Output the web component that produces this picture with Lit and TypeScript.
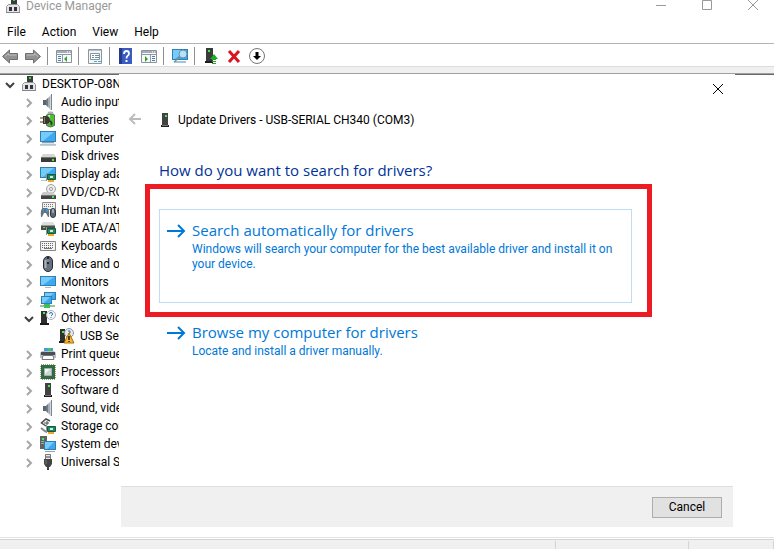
import { LitElement, html, svg, css } from "lit";
import { customElement, state } from "lit/decorators.js";

const SCREEN = (x: number, y: number, w: number, h: number) => svg`
  <rect x=${x + 0.5} y=${y + 0.5} width=${w - 1} height=${h - 1} fill="#3fa9f0" stroke="#2f7fb5"/>
  <path d="M${x + 1} ${y + 1}h${w - 3}L${x + 3} ${y + h - 1}h-2z" fill="#74ccfb"/>`;

const CARD = svg`
  <path d="M7.500 8.500h8v5h-8z" fill="#1e8a62" stroke="#14583f"/>
  <rect x="10" y="10" width="3" height="2" fill="#cfe9dd"/>
  <path d="M8 14h6v2H8z" fill="#f2a51f"/>
  <path d="M6.500 7v8" stroke="#8d9a94"/>`;

const SPEAKER = svg`
  <path d="M3 6h3v5H3z" fill="#59646e"/>
  <path d="M6 6l5-5v15l-5-5z" fill="#a5aeb6"/>
  <path d="M6 6l2-2v9l-2-2z" fill="#6e7983"/>
  <path d="M10 1h2v15h-2z" fill="#d2d8dd"/>
  <path d="M11.500 0v16" stroke="#7b858e"/>`;

const ICONS: Record<string, unknown> = {
  root: svg`
    <path d="M6 0h6v7H6z" fill="#3b3b3b"/><rect x="8" y="1" width="2" height="2" fill="#3fd04c"/>
    <path d="M3.500 6.500h9l2 2v6h-13v-6z" fill="#e4e4e6" stroke="#96969b"/>
    <path d="M1 14.500h14" stroke="#85858a"/>
    <path d="M4 9h3v4H4zM9 9h3v4H9z" fill="#33343c"/>`,
  audio: SPEAKER,
  sound: SPEAKER,
  battery: svg`
    <rect x="8" y="0" width="5" height="3" rx="1" fill="#c4c8c4" stroke="#707a70" stroke-width=".5"/>
    <path d="M6.500 3q4-2 8 0v10.500q-4 3-8 0z" fill="#4cc22e" stroke="#5c6b5a"/>
    <path d="M8 3h2v8H8z" fill="#c4f3b0"/>
    <path d="M0 6h4M0 10h4" stroke="#8b7f4c" stroke-width="1.500"/>
    <path d="M3 4h3q4 0 4 4t-4 4H3z" fill="#3a3a34"/>
    <path d="M4.500 5v6" stroke="#7d7d72"/>
    <path d="M9 9q4 1 2 4" fill="none" stroke="#3a3a34" stroke-width="2"/>`,
  computer: svg`${SCREEN(0, 1, 16, 11)}<path d="M2 13h12l2 2H0z" fill="#dbe4ea"/><path d="M2 12.500h12M0 15h16" stroke="#8fa3b1"/>`,
  disk: svg`
    <path d="M3 6h11l2 3H1z" fill="#d6d6d6"/><path d="M1 9h15v5H1z" fill="#3b3b3b"/>
    <path d="M1 9.500h15" stroke="#777"/><rect x="12" y="11" width="2" height="2" fill="#3df04a"/>`,
  display: svg`${SCREEN(0, 1, 16, 11)}<path d="M1 14h5v1H1z" fill="#b5c6d2"/>${CARD}`,
  dvd: svg`
    <circle cx="11" cy="5" r="4.500" fill="#ececec" stroke="#a2a2a2"/><circle cx="11" cy="5" r="1.500" fill="#fff" stroke="#999"/>
    <path d="M3 8h8l5 3H1z" fill="#cacaca"/><path d="M1 11h15v4H1z" fill="#444"/><path d="M1 11.500h15" stroke="#777"/><rect x="12" y="12" width="2" height="2" fill="#3df04a"/>`,
  human: svg`
    <path d="M2.500 .5h13v7h-13z" fill="#f2f2f2" stroke="#8c8c8c"/>
    <path d="M4 2.500h10M4 4.500h10" stroke="#777" stroke-dasharray="1 1"/>
    <path d="M1 15q-1-8 2-9h4q3 1 2 9H8l-2-4H4l-2 4z" fill="#6a7179"/><path d="M3 7h1v3H3zM6 7h2v3H6z" fill="#2f9be8"/>
    <rect x="10.500" y="6.500" width="5" height="9" rx="2.500" fill="#5d6874" stroke="#313940"/><path d="M13 7v4" stroke="#dce4ea"/>`,
  ide: svg`
    <path d="M3 2h10l2 3H1z" fill="#dedede"/><path d="M1 5h14v5H1z" fill="#4c4c4c"/><path d="M1 5.500h14" stroke="#999"/><rect x="3" y="7" width="2" height="1" fill="#3df04a"/>${CARD}`,
  keyboard: svg`
    <path d="M.5 3.500h15v9H.5z" fill="#f4f4f4" stroke="#868686"/>
    <path d="M2 5.500h12M2 7.500h12M2 9.500h12" stroke="#6a6a6a" stroke-dasharray="1 1"/>
    <path d="M4 10.500h8" stroke="#777"/>`,
  mouse: svg`
    <rect x="3.500" y=".5" width="9" height="15" rx="4.500" fill="#66717d" stroke="#252b31"/>
    <path d="M5.500 4v8" stroke="#a9b4be" stroke-width="2"/><path d="M8 1v7" stroke="#20262b" stroke-width="2"/><path d="M8 3v3" stroke="#e9eef2"/>`,
  monitor: svg`${SCREEN(0, 2, 16, 10)}<path d="M5 13.500h6" stroke="#a9bac6"/>`,
  network: svg`${SCREEN(4, 0, 12, 8)}${SCREEN(1, 4, 11, 8)}
    <path d="M0 14h15" stroke="#9fbfa6" stroke-width="2"/><path d="M4 12h6v4H4z" fill="#3fbf52"/>`,
  other: svg`
    <path d="M1 1h6v12H1z" fill="#2f2f2f"/><path d="M0 13h9v2H0z" fill="#1c1c1c"/><rect x="3" y="2" width="2" height="2" fill="#3df04a"/>
    <circle cx="11" cy="5" r="4.500" fill="#f6f8fa" stroke="#a8b2ba"/>
    <path d="M9.500 4q0-1.500 1.500-1.500T12.500 4q0 1-1.500 2M11 7v1" fill="none" stroke="#2c6fb5"/>`,
  warning: svg`
    <path d="M1 1h5v12H1z" fill="#2f2f2f"/><path d="M0 13h7v2H0z" fill="#1c1c1c"/><rect x="3" y="3" width="2" height="2" fill="#3df04a"/>
    <circle cx="10" cy="5" r="4.500" fill="#e6eaee" stroke="#8a949c"/><path d="M9 3h2v2h-1" fill="none" stroke="#2c6fb5"/>
    <path d="M10 5l5 10H5z" fill="#f8b62d" stroke="#a86b10"/><path d="M10 8v4M10 13v1" stroke="#1f1a10" stroke-width="1.500"/>`,
  printer: svg`
    <path d="M4 2h9v4H4z" fill="#3e9fe0"/><path d="M8 2h3v3H8z" fill="#45c45a"/>
    <path d="M2 5h12l2 2v5H0V7z" fill="#b9bec2"/><path d="M1 6h14v3H1z" fill="#4a4f54"/>
    <path d="M3 9.500h10l1 4H2z" fill="#fff" stroke="#777"/>`,
  cpu: svg`
    <rect x="1" y="1" width="14" height="14" fill="none" stroke="#b49a4e" stroke-width="2" stroke-dasharray="1 1"/>
    <path d="M1 1h14v14H1z" fill="#2d6b4d"/><path d="M4.500 4.500h7v7h-7z" fill="#d0d5d2" stroke="#9fb3a8"/><path d="M5 5h5l-5 5z" fill="#f3f5f4"/>`,
  tower: svg`
    <path d="M5 1h6v12H5z" fill="#424242"/><path d="M4 13h8v2H4z" fill="#1d1d1d"/><path d="M5 13.500h6" stroke="#777"/>
    <rect x="8" y="3" width="2" height="2" fill="#3df04a"/>`,
  storage: svg`
    <path d="M10 3L6 1 1.500 5 6 8" fill="none" stroke="#4c4c4c" stroke-width="1.500"/><path d="M4 5h5M7 3v4" stroke="#4c4c4c"/>
    <path d="M1 10l5 4" stroke="#888" stroke-width="2"/>${CARD}`,
  system: svg`
    <path d="M0 0h7v13H0z" fill="#626262"/><path d="M1 5.500h4M1 7.500h4" stroke="#a5a5a5"/><rect x="2" y="2" width="2" height="2" fill="#3df04a"/>
    ${SCREEN(4, 5, 12, 9)}<path d="M5 15.500h10" stroke="#93a4b1"/>`,
  usb: svg`
    <path d="M5.500 .5h5v5h-5z" fill="#e8e8e8" stroke="#777"/><path d="M7 2v2M9 2v2" stroke="#444"/>
    <path d="M4 5h8v5l-2 3H6l-2-3z" fill="#444"/><path d="M6 6v4" stroke="#777"/><path d="M8 13v3" stroke="#3e3e3e" stroke-width="2"/>`,
  back: svg`<path d="M.5 8.500L7.500 2v3.500h8v6h-8V15z" fill="#929292" stroke="#6e6e6e"/><path d="M3 8.500l3.500-3v1.500h8" fill="none" stroke="#bdbdbd"/>`,
  forward: svg`<path d="M15.500 8.500L8.500 2v3.500h-8v6h8V15z" fill="#929292" stroke="#6e6e6e"/><path d="M1.500 7h8V5.500l3.500 3" fill="none" stroke="#bdbdbd"/>`,
  tree: svg`
    <path d="M.5 2.500h15v12H.5z" fill="#f8f9fa" stroke="#8a929a"/><path d="M1 3h14v2H1z" fill="#a4adb6"/><path d="M11 4h1M13 4h1" stroke="#fff"/>
    <path d="M1 6.500h14M6.500 6v8" stroke="#8d99a5"/><path d="M2 8.500h3M2 10.500h3M2 12.500h3" stroke="#4f7eab"/>
    <path d="M11 8v6l-3-3z" fill="#35a02b"/>`,
  props: svg`
    <path d="M1.500 1.500h13v14h-13z" fill="#f2f4f6" stroke="#8d969f"/><path d="M2 2.500h12" stroke="#b8c0c7"/>
    <path d="M3.500 5.500h9v6h-9z" fill="#fff" stroke="#8794a0"/><path d="M5 7.500h2M8 7.500h4M5 9.500h2M8 9.500h4" stroke="#6e8ba6"/>
    <path d="M7 13.500h3M11 13.500h3" stroke="#39b4d9"/>`,
  help: svg`
    <path d="M1 0h13v16H1z" fill="#3a5bc0"/><path d="M1 0h3v16H1z" fill="#243c90"/>
    <path d="M6 6q0-3 2.500-3T11 5.500q0 1.500-1.300 2.200T8.500 10.500" fill="none" stroke="#fff" stroke-width="1.800"/><path d="M7.500 12h2v2h-2z" fill="#fff"/>`,
  action: svg`
    <path d="M.5 2.500h15v12H.5z" fill="#f8f9fa" stroke="#8a929a"/><path d="M1 3h14v2H1z" fill="#a4adb6"/><path d="M11 4h1M13 4h1" stroke="#fff"/>
    <path d="M1 6.500h14M9.500 6v8" stroke="#8d99a5"/><path d="M11 8.500h3M11 10.500h3M11 12.500h3" stroke="#4f7eab"/>
    <path d="M4 8v6l3-3z" fill="#35a02b"/>`,
  scan: svg`${SCREEN(0, 1, 16, 11)}
    <path d="M2 14h12" stroke="#9fc4dc" stroke-width="2"/>
    <circle cx="11" cy="6" r="4" fill="#b5e2fb" stroke="#6a8ea8"/><path d="M8 9l-6 5" stroke="#7d8b95" stroke-width="1.500"/>`,
  update: svg`
    <path d="M3 0h7v13H3z" fill="#3b3b3b"/><path d="M2 13h8v2H2z" fill="#1d1d1d"/><rect x="5" y="2" width="2" height="2" fill="#3df04a"/>
    <path d="M11 6l4 5h-2v1H9v-1H7z" fill="#25a52b"/><path d="M9 13.500h4M9 15.500h4" stroke="#25a52b"/>`,
  remove: svg`<path d="M3 3l10 11M13 3L3 14" stroke="#d9141e" stroke-width="3"/>`,
  disable: svg`<circle cx="8" cy="8" r="7.500" fill="#fff" stroke="#777"/><path d="M8 4v5" stroke="#000" stroke-width="3"/><path d="M4 8h8l-4 4z"/>`,
};

const icon = (name: string) => html`<svg class="icon" viewBox="0 0 16 16" aria-hidden="true">${ICONS[name]}</svg>`;

interface Device { label: string; icon: string; level: number; open?: boolean }

const DEVICES: Device[] = [
  { label: "DESKTOP-O8N", icon: "root", level: 0, open: true },
  { label: "Audio inputs", icon: "audio", level: 1, open: false },
  { label: "Batteries", icon: "battery", level: 1, open: false },
  { label: "Computer", icon: "computer", level: 1, open: false },
  { label: "Disk drives", icon: "disk", level: 1, open: false },
  { label: "Display adapters", icon: "display", level: 1, open: false },
  { label: "DVD/CD-ROM", icon: "dvd", level: 1, open: false },
  { label: "Human Interface", icon: "human", level: 1, open: false },
  { label: "IDE ATA/ATAPI", icon: "ide", level: 1, open: false },
  { label: "Keyboards", icon: "keyboard", level: 1, open: false },
  { label: "Mice and other", icon: "mouse", level: 1, open: false },
  { label: "Monitors", icon: "monitor", level: 1, open: false },
  { label: "Network adapters", icon: "network", level: 1, open: false },
  { label: "Other devices", icon: "other", level: 1, open: true },
  { label: "USB Serial", icon: "warning", level: 2 },
  { label: "Print queues", icon: "printer", level: 1, open: false },
  { label: "Processors", icon: "cpu", level: 1, open: false },
  { label: "Software devices", icon: "tower", level: 1, open: false },
  { label: "Sound, video", icon: "sound", level: 1, open: false },
  { label: "Storage controllers", icon: "storage", level: 1, open: false },
  { label: "System devices", icon: "system", level: 1, open: false },
  { label: "Universal Serial", icon: "usb", level: 1, open: false },
];

const TOOLS: Array<[string, string] | null> = [
  ["back", "Back"], ["forward", "Forward"], null,
  ["tree", "Show/Hide Console Tree"], null,
  ["props", "Properties"], null,
  ["help", "Help"], ["action", "Show/Hide Action Pane"], null,
  ["scan", "Scan for hardware changes"], null,
  ["update", "Update driver"], ["remove", "Uninstall device"], ["disable", "Disable device"],
];

const shared = css`
  * { box-sizing: border-box; }
  button { border: 0; padding: 0; margin: 0; background: none; font: inherit; color: inherit; text-align: left; }
  svg { display: block; flex: none; overflow: visible; }
  .icon { width: 16px; height: 16px; }
`;

@customElement("device-tree")
export class DeviceTree extends LitElement {
  static styles = [shared, css`
    :host { display: block; overflow: hidden; }
    ul { list-style: none; margin: 0; padding: 0 0 0 2px; }
    .row { display: flex; align-items: center; height: 18px; white-space: nowrap; }
    .level1 { padding-left: 19px; }
    .level2 { padding-left: 38px; }
    .toggle { width: 16px; height: 16px; flex: none; margin-right: 3px; }
    .chevron { width: 16px; height: 16px; fill: none; stroke: #a6a6a6; stroke-width: 2; }
    .open { stroke: #404040; }
    .icon { margin-right: 5px; }
  `];

  render() {
    return html`<ul role="tree" aria-label="Devices">
      ${DEVICES.map((d) => html`
        <li class="row level${d.level}" role="treeitem" aria-level=${d.level + 1}>
          ${d.open === undefined
            ? html`<span class="toggle"></span>`
            : html`<button class="toggle" aria-label="${d.open ? "Collapse" : "Expand"} ${d.label}">
                <svg class="chevron ${d.open ? "open" : ""}" viewBox="0 0 16 16">
                  <path d=${d.open ? "M4 7l4 4 4-4" : "M6 5l4 4-4 4"} />
                </svg></button>`}
          ${icon(d.icon)}<span>${d.label}</span>
        </li>`)}
    </ul>`;
  }
}

@customElement("update-dialog")
export class UpdateDialog extends LitElement {
  static styles = [shared, css`
    :host { display: flex; flex-direction: column; background: #fff; }
    .top { display: flex; justify-content: flex-end; }
    .close { width: 34px; height: 30px; display: grid; place-items: center; }
    .close svg { width: 12px; height: 12px; stroke: #000; }
    .title { display: flex; align-items: center; gap: 14px; height: 32px; padding-left: 8px; }
    .arrow { width: 16px; height: 16px; fill: none; stroke: #bcbcbc; stroke-width: 2; }
    .device { display: flex; align-items: center; gap: 5px; }
    h1 { margin: 0; font-size: 12px; font-weight: 400; }
    .content { flex: 1; padding: 22px 103px 0 40px; }
    h2 { margin: 0 0 27px; font: 400 15px/24px "Open Sans", "Noto Sans", sans-serif; color: #003399; }
    .choice { position: relative; margin-bottom: 8px; }
    .link { display: flex; gap: 7px; width: 100%; padding: 9px 8px 9px 7px; border: 1px solid transparent; color: #0078d7; }
    .selected { min-height: 94px; border-color: #bfddf2; }
    .link svg { width: 18px; height: 24px; fill: none; stroke: #0078d7; stroke-width: 2; }
    .name { display: block; font: 400 15px/23px "Open Sans", "Noto Sans", sans-serif; }
    .note { display: block; line-height: 15px; }
    .mark { position: absolute; inset: -25px -20px -14px -14px; border: 5px solid #ed1c24; pointer-events: none; }
    footer { display: flex; justify-content: flex-end; align-items: center; height: 41px; margin: 0 2px; padding-right: 11px;
      background: #f0f0f0; border-top: 1px solid #dfdfdf; }
    .cancel { width: 70px; height: 21px; border: 1px solid #adadad; background: #e1e1e1; text-align: center; line-height: 19px; }
  `];

  private choice(name: string, note: string, selected: boolean) {
    return html`<div class="choice">
      <button class="link ${selected ? "selected" : ""}">
        <svg viewBox="0 0 18 24"><path d="M0 12h17M11 6l6 6-6 6" /></svg>
        <span><span class="name">${name}</span><span class="note">${note}</span></span>
      </button>
      ${selected ? html`<div class="mark"></div>` : ""}
    </div>`;
  }

  render() {
    return html`
      <div class="top"><button class="close" aria-label="Close">
        <svg viewBox="0 0 12 12"><path d="M1 1l10 10M11 1L1 11" /></svg></button></div>
      <div class="title">
        <button aria-label="Back"><svg class="arrow" viewBox="0 0 16 16"><path d="M3 7h11M8 2L3 7l5 5" /></svg></button>
        <div class="device">${icon("tower")}<h1>Update Drivers - USB-SERIAL CH340 (COM3)</h1></div>
      </div>
      <div class="content">
        <h2>How do you want to search for drivers?</h2>
        ${this.choice("Search automatically for drivers", "Windows will search your computer for the best available driver and install it on your device.", true)}
        ${this.choice("Browse my computer for drivers", "Locate and install a driver manually.", false)}
      </div>
      <footer><button class="cancel">Cancel</button></footer>`;
  }
}

@customElement("app-root")
export class AppRoot extends LitElement {
  static styles = [shared, css`
    :host { display: flex; flex-direction: column; min-height: 100vh; background: #fff; color: #000;
      font: 12px/16px Roboto, "Open Sans", sans-serif; }
    .caption { display: flex; align-items: center; height: 12px; padding-left: 5px; color: #999; margin-bottom: 9px; }
    .caption .icon { margin-right: 5px; }
    .controls { margin: 0 -2px 0 auto; display: flex; }
    .controls button { width: 46px; display: grid; place-items: center; }
    .controls svg { width: 12px; height: 12px; fill: none; stroke: #999; }
    .menu { display: flex; align-items: center; gap: 16px; height: 23px; padding-left: 7px; border-bottom: 1px solid #b4b4b4; }
    .tools { display: flex; align-items: center; gap: 7px; height: 23px; padding: 2px 0 0 2px; border-bottom: 1px solid #dcdcdc; }
    .sep { width: 1px; height: 18px; background: #8f8f8f; margin: 0 1px 0 -1px; }
    .strip { height: 7px; background: #f0f0f0; border-bottom: 1px solid #a0a0a0; }
    .stage { position: relative; flex: 1; border-bottom: 1px solid #e3e3e3; min-height: 464px; }
    .pane { height: 100%; border-top: 1px solid #696969; }
    device-tree { width: 119px; }
    update-dialog { position: absolute; inset: 0 39px 10px 119px; }
    .status { display: flex; justify-content: flex-end; height: 10px; margin-top: 1px; padding-top: 1px; background: #f0f0f0; border-top: 1px solid #d4d4d4; }
    .status span { width: 133px; border-left: 1px solid #d4d4d4; }
    .status .last { width: 86px; border-right: 1px solid #d4d4d4; }
  `];

  @state() private menus = ["File", "Action", "View", "Help"];

  render() {
    return html`
      <header class="caption">
        ${icon("root")}<span>Device Manager</span>
        <div class="controls">
          <button aria-label="Minimize"><svg viewBox="0 0 12 12"><path d="M1 5.500h10" /></svg></button>
          <button aria-label="Maximize"><svg viewBox="0 0 12 12"><path d="M1.500 .5h9v9h-9z" /></svg></button>
          <button aria-label="Close"><svg viewBox="0 0 12 12"><path d="M1 0l10 10M11 0L1 10" /></svg></button>
        </div>
      </header>
      <nav class="menu">${this.menus.map((m) => html`<button>${m}</button>`)}</nav>
      <div class="tools" role="toolbar" aria-label="Standard">
        ${TOOLS.map((t) => t ? html`<button aria-label=${t[1]}>${icon(t[0])}</button>` : html`<span class="sep"></span>`)}
      </div>
      <div class="strip"></div>
      <main class="stage">
        <div class="pane"><device-tree></device-tree></div>
        <update-dialog></update-dialog>
      </main>
      <footer class="status"><span></span><span class="last"></span></footer>`;
  }
}
